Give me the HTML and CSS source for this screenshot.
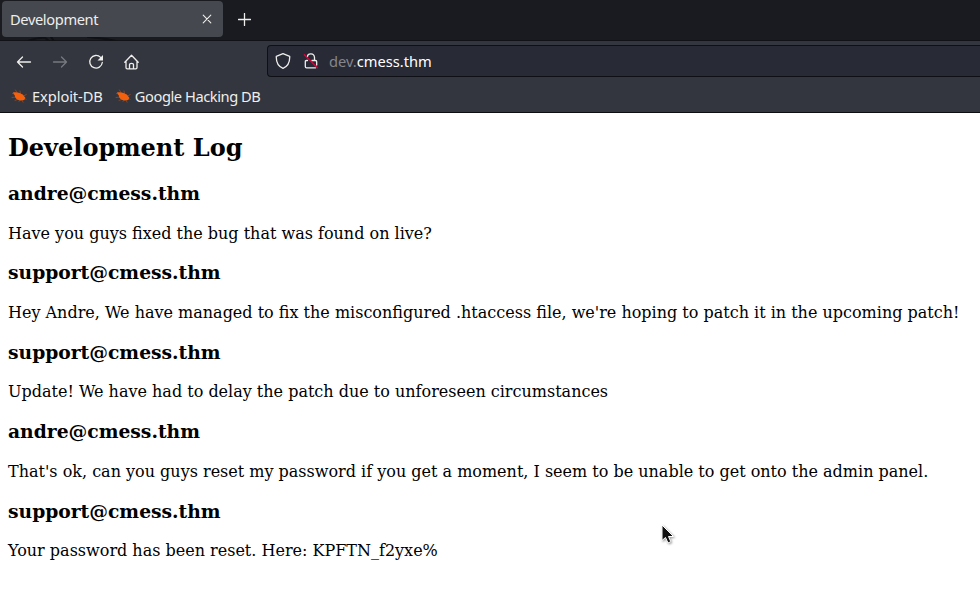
FILE: index.html
```html
<!DOCTYPE html>
<html lang="en">
<head>
<meta charset="utf-8">
<title>Development</title>
<link rel="stylesheet" href="styles.css">
</head>
<body>
<svg class="defs" width="0" height="0" aria-hidden="true">
  <symbol id="bug" viewBox="0 0 16 16">
    <path d="M1.500 5.500 5 6.500M4.500 2 6.500 5.500M9 3l.5 3M1 9.500l4-.5M4 12.500l3.500-1.500M8 13.500l1.500-2M12.500 8l2.800-1.500M11 12l1 2.200M13 9.500l2 2" fill="none" stroke="#9c4822" stroke-width=".8"/>
    <path d="M1.800 4.500C4 4.200 6.500 4.200 8.500 5L11.800 6.500 14.300 9.800 13.300 12 9.500 12.600C6.500 12.200 4 10.200 3.800 7.500Z" fill="#f4600c"/>
  </symbol>
</svg>
<div class="browser">
  <div class="tabs">
    <div class="tab"><span class="title">Development</span>
      <svg class="close" width="10" height="10" viewBox="0 0 10 10"><path d="m1.200 1.200 7.600 7.600m0-7.600L1.200 8.800"/></svg>
    </div>
    <svg class="plus" width="13" height="13" viewBox="0 0 13 13"><path d="M6.500.5v12M.5 6.500h12"/></svg>
    <svg class="shade" width="130" height="4" viewBox="0 0 130 4"><path d="M28 4Q35 1 45 .5M44 0l5 4M51 0l3 4M88 0q15 1 28 4"/></svg>
  </div>
  <div class="toolbar">
    <div class="nav">
      <svg width="16" height="16" viewBox="0 0 16 16"><path d="M14.500 8H1.500M6.500 3 1.500 8 6.500 13"/></svg>
      <svg class="off" width="16" height="16" viewBox="0 0 16 16"><path d="M1.500 8h13M9.500 3 14.500 8 9.500 13"/></svg>
      <svg width="16" height="16" viewBox="0 0 16 16"><path d="M12.600 3.400A6.300 6.300 0 1 0 14.300 8.500"/><path class="solid" d="M15 1v5.500H9.500Z"/></svg>
      <svg width="16" height="16" viewBox="0 0 16 16"><path d="M.8 8.300 7.500 1.300l6.700 7M2 7.300v6.200q0 1.300 1.300 1.300h8.400q1.300 0 1.300-1.300V7.300M5.500 14.800V10.500Q5.500 9.300 7.500 9.300t2 1.200v4.300"/></svg>
    </div>
    <div class="url">
      <svg width="16" height="16" viewBox="0 0 16 16"><path d="M8 .7 14.700 3.300C14.900 8 13.700 13 8 15.300 2.300 13 1.100 8 1.300 3.300Z"/></svg>
      <svg class="lock" width="16" height="16" viewBox="0 0 16 16"><path d="M4.300 3.800C4.800-.2 11.200-.2 11.500 4.500V7.500M4.500 7.500H3.500Q2.300 7.500 2.300 8.700v4.800q0 1.300 1.300 1.300h9M9 7.500H12.500Q13.700 7.500 13.700 8.700V12"/><path class="slash" d="m1.300 1.700 13 13"/></svg>
      <span class="address"><span class="sub">dev.</span>cmess.thm</span>
    </div>
  </div>
  <div class="bookmarks">
    <div class="bookmark"><svg width="16" height="16"><use href="#bug"/></svg><span>Exploit-DB</span></div>
    <div class="bookmark"><svg width="16" height="16"><use href="#bug"/></svg><span class="long">Google Hacking DB</span></div>
  </div>
</div>
<main>
  <h2>Development Log</h2>
  <h3>andre@cmess.thm</h3>
  <p>Have you guys fixed the bug that was found on live?</p>
  <h3>support@cmess.thm</h3>
  <p>Hey Andre, We have managed to fix the misconfigured .htaccess file, we're hoping to patch it in the upcoming patch!</p>
  <h3>support@cmess.thm</h3>
  <p>Update! We have had to delay the patch due to unforeseen circumstances</p>
  <h3>andre@cmess.thm</h3>
  <p>That's ok, can you guys reset my password if you get a moment, I seem to be unable to get onto the admin panel.</p>
  <h3>support@cmess.thm</h3>
  <p>Your password has been reset. Here: KPFTN_f2yxe%</p>
</main>
<svg class="cursor" width="14" height="21" viewBox="0 0 14 21"><path d="M1 1v15.500l3.500-3 2.500 5.500 2.800-1.300L7.500 12.500H12.500Z"/></svg>
</body>
</html>
```

FILE: styles.css
```css
body {
  margin: 0;
  height: 589px;
  overflow: hidden;
  background: #fff;
  color: #000;
  font-family: "DejaVu Serif", serif;
  font-size: 16px;
}
.defs { position: absolute; }
.browser {
  box-sizing: border-box;
  height: 113px;
  border-bottom: 1px solid #0c0e12;
  background: #33363e;
  color: #eeeeec;
  font-family: "Noto Sans", sans-serif;
  font-size: 14.67px;
}
.browser svg {
  display: block;
  flex: none;
  fill: none;
  stroke: #eeeeec;
  stroke-width: 1.3;
  stroke-linejoin: round;
  stroke-linecap: round;
}
.tabs {
  position: relative;
  box-sizing: border-box;
  display: flex;
  height: 41px;
  padding: 1px 0 0 2px;
  border-bottom: 1px solid #101217;
  background: #1a1b20;
}
.tab {
  box-sizing: border-box;
  display: flex;
  align-items: center;
  justify-content: space-between;
  width: 221px;
  height: 36px;
  padding: 0 11px 0 8px;
  border-radius: 4px;
  background: #45484e;
}
.title { letter-spacing: -.38px; }
.browser .close { stroke-width: 1.1; }
.browser .plus { margin: 12px 0 0 15px; stroke-width: 1.3; }
.browser .shade {
  position: absolute;
  left: 0;
  top: 37px;
  stroke: #0f1013;
  stroke-width: 2;
}
.toolbar { display: flex; height: 41px; }
.nav {
  display: flex;
  align-items: center;
  gap: 20px;
  width: 251px;
  padding-left: 16px;
}
.browser .off { stroke: #777980; }
.browser .solid { fill: #eeeeec; stroke: none; }
.url {
  box-sizing: border-box;
  display: flex;
  align-items: center;
  flex: 1;
  height: 32px;
  margin-top: 4px;
  padding-left: 7px;
  border: 1px solid #0e1015;
  border-right: 0;
  border-radius: 4px 0 0 4px;
  background: #282a36;
}
.browser .lock { margin-left: 12px; }
.browser .slash { stroke: #e2003b; }
.address { margin-left: 10px; color: #fff; }
.sub { color: #85868b; }
.bookmarks {
  display: flex;
  align-items: center;
  height: 28px;
  padding-left: 11px;
  gap: 12px;
}
.bookmark { display: flex; align-items: center; gap: 5px; letter-spacing: -.08px; }
.bookmark .long { margin-left: -1px; letter-spacing: -.44px; }
.browser .bookmark svg { stroke: none; }
main { padding: 0 8px; white-space: nowrap; display: flow-root; }
h2 { margin: 19.92px 0; font-size: 24px; line-height: 29px; }
h3 { margin: 18.72px 0; font-size: 18.72px; line-height: 23px; }
p { margin: 16px 0; line-height: 19px; }
.cursor {
  position: absolute;
  left: 661px;
  top: 524px;
  fill: #111;
  stroke: #fff;
  filter: drop-shadow(1px 1px 1px rgb(0 0 0 / 40%));
}
```
